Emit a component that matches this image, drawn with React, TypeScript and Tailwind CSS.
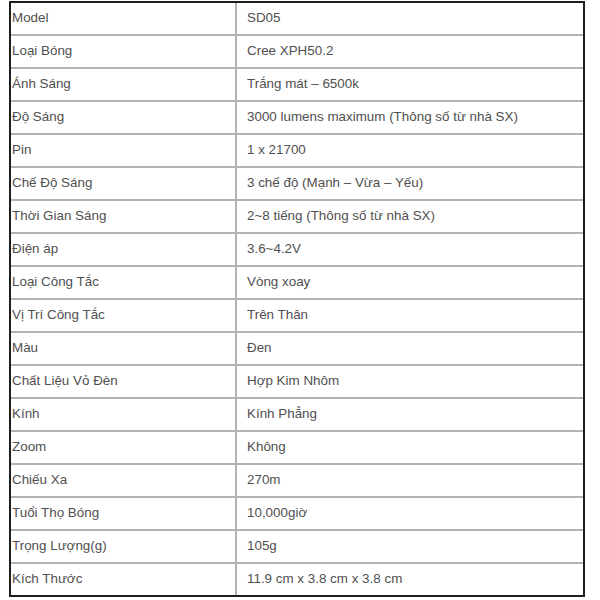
import React from 'react';

const specs = [
  { label: 'Model', value: 'SD05' },
  { label: 'Loại Bóng', value: 'Cree XPH50.2' },
  { label: 'Ánh Sáng', value: 'Trắng mát – 6500k' },
  { label: 'Độ Sáng', value: '3000 lumens maximum (Thông số từ nhà SX)' },
  { label: 'Pin', value: '1 x 21700' },
  { label: 'Chế Độ Sáng', value: '3 chế độ (Mạnh – Vừa – Yếu)' },
  { label: 'Thời Gian Sáng', value: '2~8 tiếng (Thông số từ nhà SX)' },
  { label: 'Điện áp', value: '3.6~4.2V' },
  { label: 'Loại Công Tắc', value: 'Vòng xoay' },
  { label: 'Vị Trí Công Tắc', value: 'Trên Thân' },
  { label: 'Màu', value: 'Đen' },
  { label: 'Chất Liệu Vỏ Đèn', value: 'Hợp Kim Nhôm' },
  { label: 'Kính', value: 'Kính Phẳng' },
  { label: 'Zoom', value: 'Không' },
  { label: 'Chiếu Xa', value: '270m' },
  { label: 'Tuổi Thọ Bóng', value: '10,000giờ' },
  { label: 'Trọng Lượng(g)', value: '105g' },
  { label: 'Kích Thước', value: '11.9 cm x 3.8 cm x 3.8 cm' },
];

export default function App() {
  return (
    <div className="w-[600px] h-[600px] bg-white pt-[1px] pl-[9px] font-['Liberation_Sans',Arial,sans-serif] text-[13.4px] text-[#505050]">
      {/* Spec table */}
      <div className="w-[576px] border-2 border-[#1e1e1e]">
        {specs.map((row, i) => (
          <div
            key={row.label}
            className={`flex ${i < specs.length - 1 ? 'h-[33px] border-b-2 border-[#b3b3b3]' : 'h-[31px]'}`}
          >
            <div className="w-[226px] shrink-0 flex items-center pl-[1px] border-r-2 border-[#b3b3b3]">
              {row.label}
            </div>
            <div className="flex-1 flex items-center pl-[10px]">{row.value}</div>
          </div>
        ))}
      </div>
    </div>
  );
}
